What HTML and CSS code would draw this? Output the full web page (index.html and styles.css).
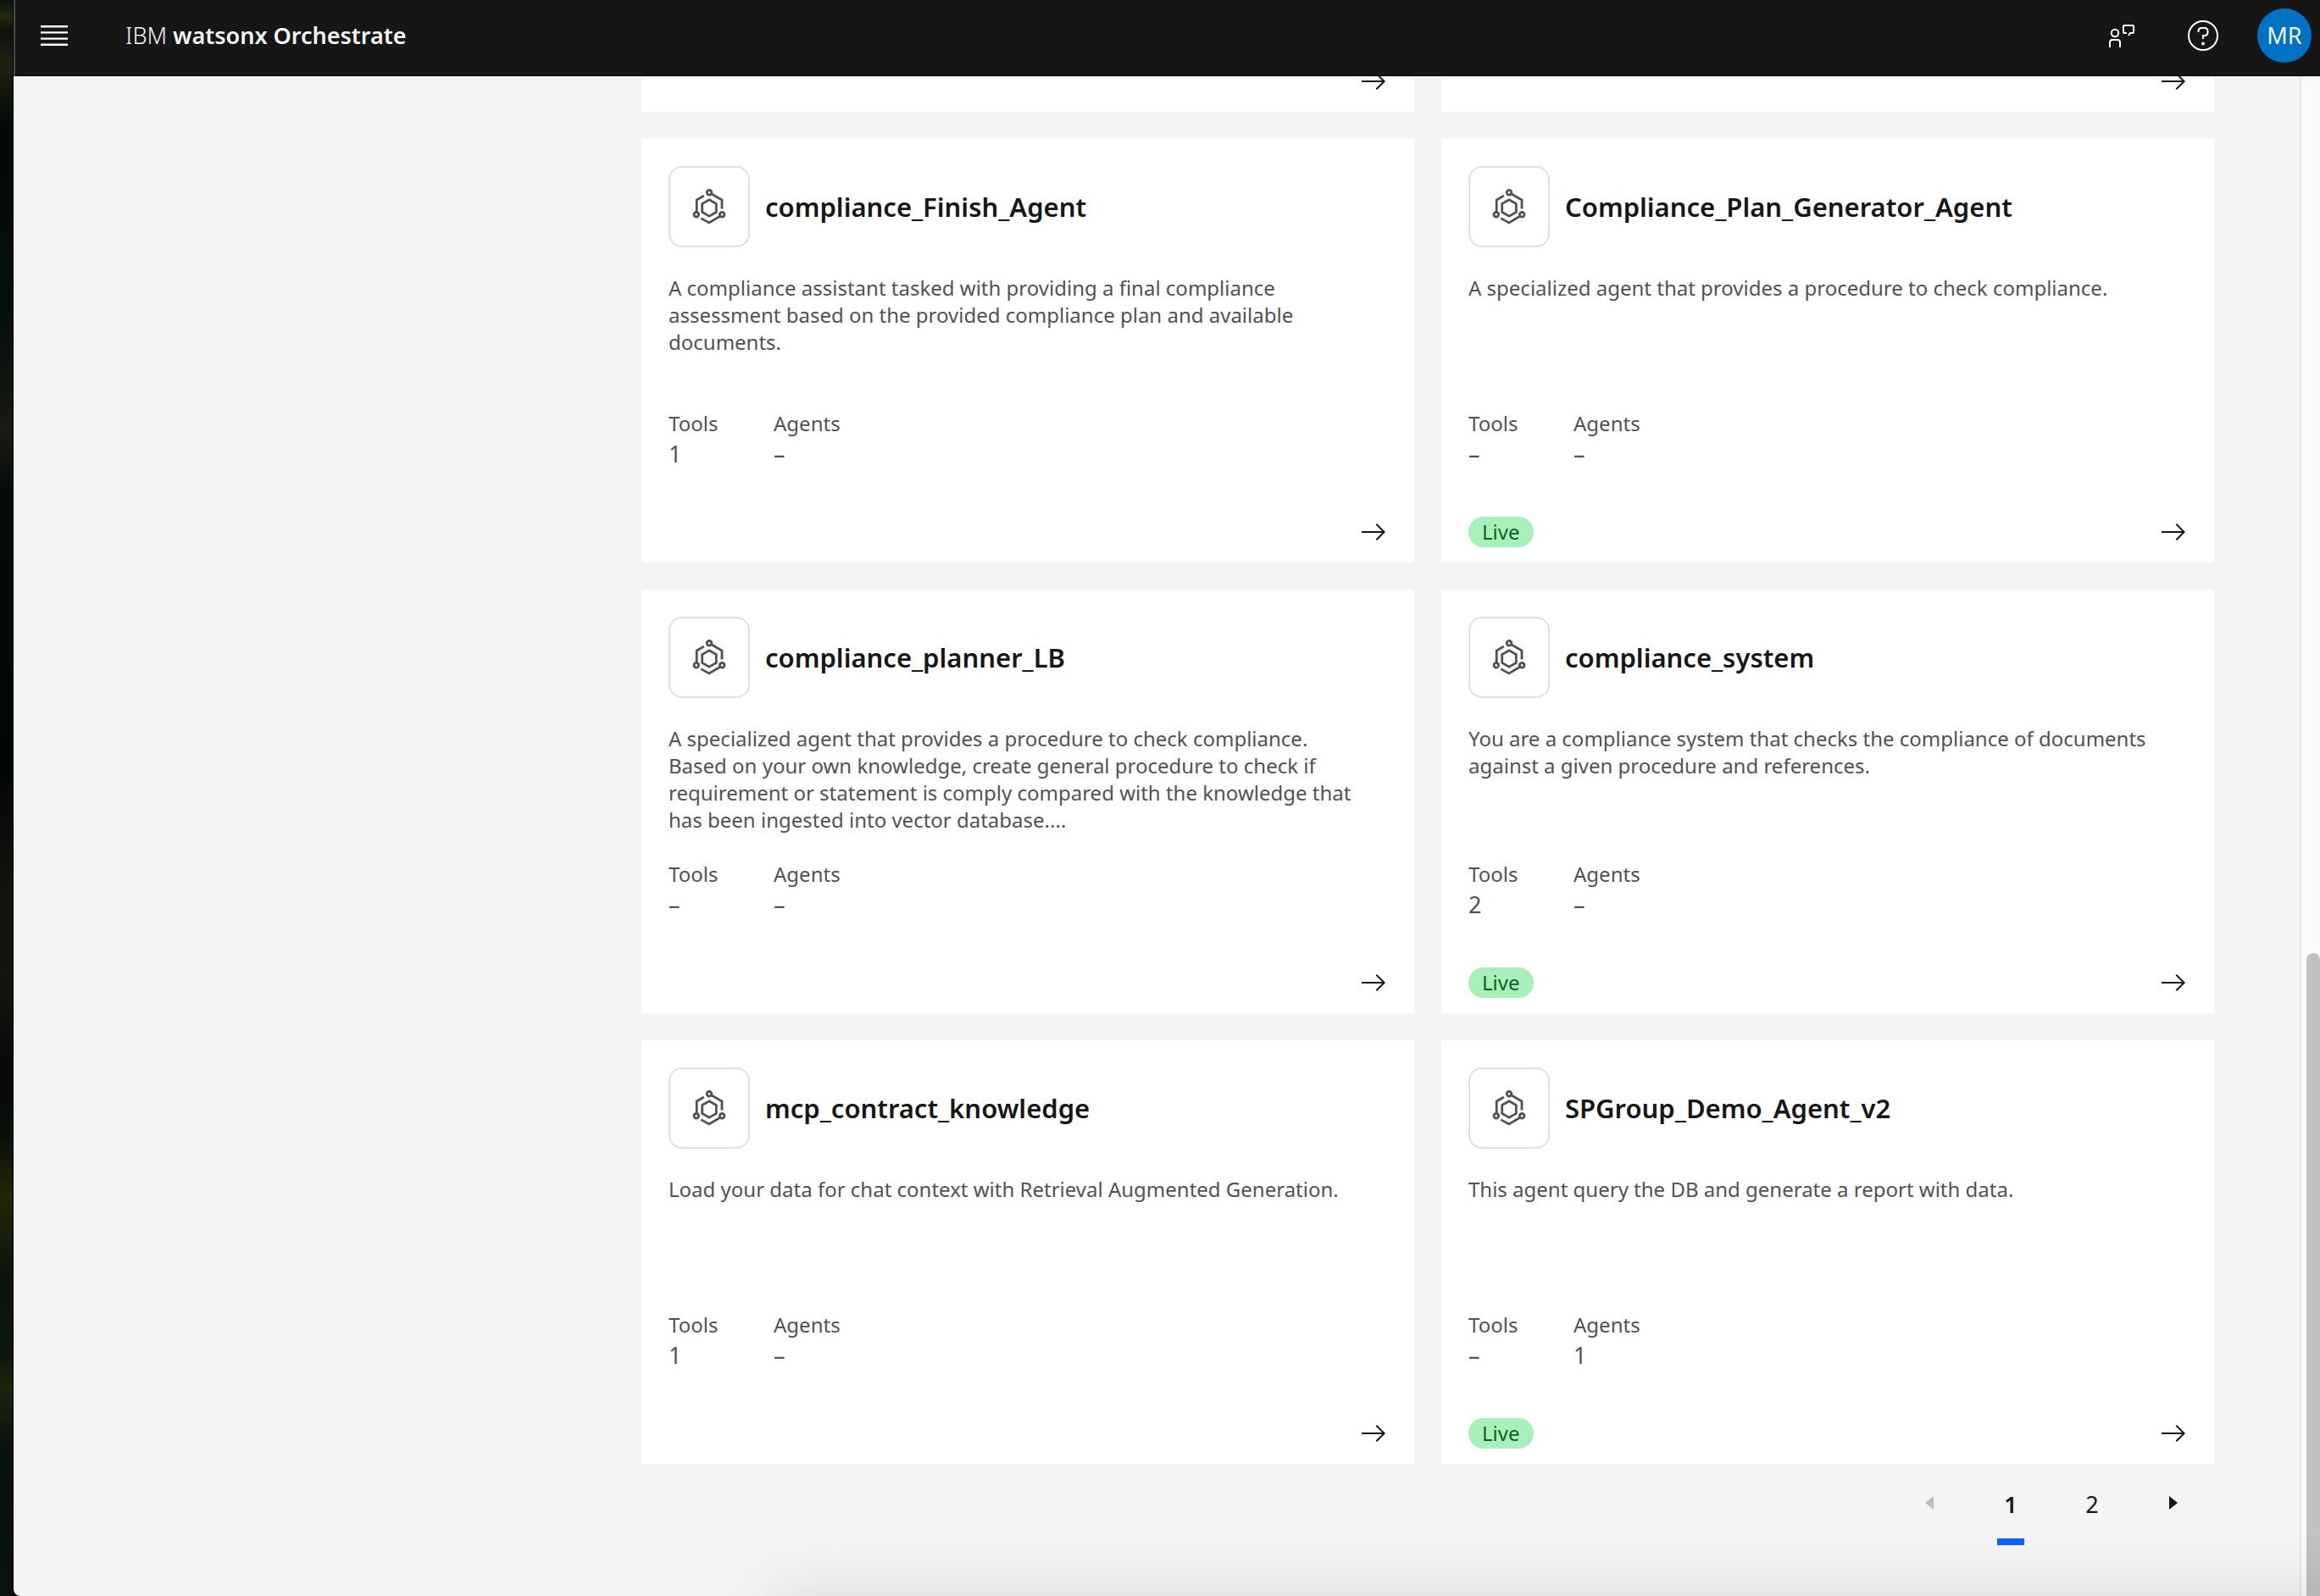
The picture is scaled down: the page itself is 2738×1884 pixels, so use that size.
FILE: index.html
```html
<!DOCTYPE html>
<html lang="en">
<head>
<meta charset="utf-8">
<title>IBM watsonx Orchestrate</title>
<link rel="stylesheet" href="styles.css">
</head>
<body>
<svg class="sprite" aria-hidden="true">
  <symbol id="agent" viewBox="0 0 48 48">
    <g fill="none" stroke="currentColor" stroke-width="2.8">
      <circle cx="24" cy="7.3" r="2.8"/>
      <circle cx="8.8" cy="33.3" r="2.8"/>
      <circle cx="39.2" cy="33.3" r="2.8"/>
      <path d="M24 15.8l8.3 4.8v9.8L24 35.2l-8.3-4.8v-9.8z"/>
      <path d="M9.2 30.5V16l8.6-5M26.5 8.8L39 16v10.5M14.3 37.6l9.6 5.4 12.9-7.7"/>
    </g>
  </symbol>
  <symbol id="arrow" viewBox="0 0 16 16">
    <path fill="currentColor" d="M9.3 3.7L13.1 7.5H1v1h12.1L9.3 12.3 10 13l5-5-5-5z"/>
  </symbol>
</svg>
<div class="desktop-edge"></div>
<div class="window">
  <header class="topbar">
    <button class="icon-button menu" aria-label="Menu">
      <svg width="40" height="40" viewBox="0 0 20 20"><path fill="#fff" d="M2 14.8h16V16H2zM2 11.2h16v1.2H2zM2 7.6h16v1.2H2zM2 4h16v1.2H2z"/></svg>
    </button>
    <a class="brand" href="#">IBM <b>watsonx Orchestrate</b></a>
    <button class="icon-button" aria-label="Feedback">
      <svg width="32" height="32" viewBox="0 0 32 32" fill="none" stroke="#fff" stroke-width="2"><circle cx="8" cy="13" r="4.2"/><path d="M2 30v-6q0-3 3-3h6q3 0 3 3v6M22 13h-3q-1 0-1-1V5q0-1 1-1h10q1 0 1 1v7q0 1-1 1h-3l-2 3"/></svg>
    </button>
    <button class="icon-button" aria-label="Help">
      <svg width="40" height="40" viewBox="0 0 40 40" fill="none" stroke="#fff" stroke-width="2"><circle cx="20" cy="20" r="17"/><path d="M14.5 16v-1q0-4 4-4h3q4 0 4 4v1q0 4-4 4H20v4"/><circle cx="20" cy="29.5" r="2" fill="#fff" stroke="none"/></svg>
    </button>
    <button class="avatar">MR</button>
  </header>
  <div class="body">
    <main class="catalog">
      <div class="cards">
        <article class="card card-end"><footer class="card-foot"><a class="open" href="#" aria-label="Open"><svg><use href="#arrow"/></svg></a></footer></article>
        <article class="card card-end"><footer class="card-foot"><a class="open" href="#" aria-label="Open"><svg><use href="#arrow"/></svg></a></footer></article>

        <article class="card">
          <div class="card-head"><span class="badge"><svg><use href="#agent"/></svg></span><h2>compliance_Finish_Agent</h2></div>
          <p class="about">A compliance assistant tasked with providing a final compliance assessment based on the provided compliance plan and available documents.</p>
          <dl class="stats"><div><dt>Tools</dt><dd>1</dd></div><div><dt>Agents</dt><dd>–</dd></div></dl>
          <footer class="card-foot"><a class="open" href="#" aria-label="Open"><svg><use href="#arrow"/></svg></a></footer>
        </article>
        <article class="card">
          <div class="card-head"><span class="badge"><svg><use href="#agent"/></svg></span><h2>Compliance_Plan_Generator_Agent</h2></div>
          <p class="about">A specialized agent that provides a procedure to check compliance.</p>
          <dl class="stats"><div><dt>Tools</dt><dd>–</dd></div><div><dt>Agents</dt><dd>–</dd></div></dl>
          <footer class="card-foot"><span class="live">Live</span><a class="open" href="#" aria-label="Open"><svg><use href="#arrow"/></svg></a></footer>
        </article>
        <article class="card">
          <div class="card-head"><span class="badge"><svg><use href="#agent"/></svg></span><h2>compliance_planner_LB</h2></div>
          <p class="about">A specialized agent that provides a procedure to check compliance. Based on your own knowledge, create general procedure to check if requirement or statement is comply compared with the knowledge that has been ingested into vector database....</p>
          <dl class="stats"><div><dt>Tools</dt><dd>–</dd></div><div><dt>Agents</dt><dd>–</dd></div></dl>
          <footer class="card-foot"><a class="open" href="#" aria-label="Open"><svg><use href="#arrow"/></svg></a></footer>
        </article>
        <article class="card">
          <div class="card-head"><span class="badge"><svg><use href="#agent"/></svg></span><h2>compliance_system</h2></div>
          <p class="about">You are a compliance system that checks the compliance of documents against a given procedure and references.</p>
          <dl class="stats"><div><dt>Tools</dt><dd>2</dd></div><div><dt>Agents</dt><dd>–</dd></div></dl>
          <footer class="card-foot"><span class="live">Live</span><a class="open" href="#" aria-label="Open"><svg><use href="#arrow"/></svg></a></footer>
        </article>
        <article class="card">
          <div class="card-head"><span class="badge"><svg><use href="#agent"/></svg></span><h2>mcp_contract_knowledge</h2></div>
          <p class="about">Load your data for chat context with Retrieval Augmented Generation.</p>
          <dl class="stats"><div><dt>Tools</dt><dd>1</dd></div><div><dt>Agents</dt><dd>–</dd></div></dl>
          <footer class="card-foot"><a class="open" href="#" aria-label="Open"><svg><use href="#arrow"/></svg></a></footer>
        </article>
        <article class="card">
          <div class="card-head"><span class="badge"><svg><use href="#agent"/></svg></span><h2>SPGroup_Demo_Agent_v2</h2></div>
          <p class="about">This agent query the DB and generate a report with data.</p>
          <dl class="stats"><div><dt>Tools</dt><dd>–</dd></div><div><dt>Agents</dt><dd>1</dd></div></dl>
          <footer class="card-foot"><span class="live">Live</span><a class="open" href="#" aria-label="Open"><svg><use href="#arrow"/></svg></a></footer>
        </article>
      </div>
      <nav class="pages" aria-label="Pages">
        <button class="page step" disabled aria-label="Previous page"><svg width="10" height="16" viewBox="0 0 10 16"><path fill="#bdbdbd" d="M10 0v16L0 8z"/></svg></button>
        <button class="page current" aria-current="page">1</button>
        <button class="page">2</button>
        <button class="page step" aria-label="Next page"><svg width="10" height="16" viewBox="0 0 10 16"><path fill="#161616" d="M0 0v16l10-8z"/></svg></button>
      </nav>
    </main>
    <div class="track"><div class="thumb"></div></div>
  </div>
</div>
<div class="dock-shade"></div>
</body>
</html>
```
FILE: styles.css
```css
* {
  box-sizing: border-box;
}

body {
  margin: 0;
  min-height: 100vh;
  display: flex;
  overflow: hidden;
  background: #000;
  color: #161616;
  font-family: "Noto Sans", sans-serif;
  font-size: 24px;
  line-height: 32px;
}

button {
  border: 0;
  padding: 0;
  background: none;
  color: inherit;
  font: inherit;
}

a {
  color: inherit;
  text-decoration: none;
}

.sprite {
  position: absolute;
  width: 0;
  height: 0;
}

/* strip of wallpaper beside the window */
.desktop-edge {
  width: 16px;
  border-right: 1px solid #000;
  background: linear-gradient(#0c1408, #23280f 1%, #0d1210 2%, #1f220d 4%, #030a09 8%, #04100d 20%, #1a1a10 27%, #040c0b 31%, #020706 48%, #12110d 55%, #16150f 61%, #090909 67%, #070f08 71%, #242607 75%, #0a150b 80%, #0c190c 85%, #1c240c 87%, #07110d 91%, #0a140e);
}

.window {
  flex: 1;
  display: flex;
  flex-direction: column;
  min-width: 0;
  border-bottom-left-radius: 8px;
  overflow: hidden;
  background: #f4f4f4;
}

.topbar {
  display: flex;
  align-items: center;
  height: 90px;
  padding: 0 10px 6px 0;
  border-left: 2px solid #4c4c4c;
  border-bottom: 1px solid #000;
  background: #161616;
  color: #f4f4f4;
}

.icon-button {
  display: grid;
  place-items: center;
  width: 96px;
  height: 64px;
}

.menu {
  width: 92px;
}

.brand {
  margin-left: 38px;
  margin-right: auto;
  font-size: 27px;
  font-weight: 300;
}

.brand b {
  font-weight: 600;
}

.avatar {
  width: 64px;
  height: 64px;
  margin-left: 16px;
  border-radius: 50%;
  background: #0072c3;
  font-size: 27px;
}

.body {
  flex: 1;
  display: flex;
}

.catalog {
  flex: 1;
  padding: 0 101px 60px 741px;
}

.cards {
  display: grid;
  grid-template-columns: 1fr 1fr;
  gap: 32px;
}

.card {
  display: flex;
  flex-direction: column;
  min-height: 500px;
  padding: 32px 32px 18px;
  background: #fff;
}

.card-end {
  min-height: 42px;
  height: 42px;
  padding-top: 0;
  justify-content: flex-end;
  overflow: hidden;
}

.card-head {
  display: flex;
  align-items: center;
  gap: 18px;
}

.badge {
  display: grid;
  place-items: center;
  width: 96px;
  height: 96px;
  border: 2px solid #e0e0e0;
  border-radius: 16px;
  color: #525252;
}

.badge svg {
  width: 48px;
  height: 48px;
}

h2 {
  margin: 0;
  font-size: 31px;
  line-height: 40px;
  font-weight: 600;
}

.about {
  min-height: 128px;
  margin: 32px 0;
  padding-right: 32px;
  color: #525252;
}

.stats {
  display: grid;
  grid-template-columns: 60px 120px;
  gap: 64px;
  margin: 0;
  color: #525252;
}

.stats dd {
  margin: 0;
  font-size: 27px;
  line-height: 40px;
}

.card-foot {
  display: flex;
  align-items: center;
  height: 36px;
  flex-shrink: 0;
  margin-top: auto;
}

.live {
  padding: 2px 16px;
  border-radius: 18px;
  background: #a7f0ba;
  color: #0e6027;
}

.open {
  display: flex;
  margin-left: auto;
}

.open svg {
  width: 32px;
  height: 32px;
}

.pages {
  display: flex;
  justify-content: flex-end;
}

.page {
  display: grid;
  place-items: center;
  width: 96px;
  height: 96px;
  font-size: 27px;
}

.step {
  padding-bottom: 4px;
}

.current {
  font-weight: 600;
  background: linear-gradient(#0f62fe, #0f62fe) bottom / 32px 8px no-repeat;
}

.track {
  display: flex;
  flex-direction: column;
  justify-content: flex-end;
  width: 24px;
  padding-left: 6px;
  border-left: 2px solid #e8e8e8;
  background: #fafafa;
}

.thumb {
  height: 42.3%;
  border-radius: 8px 8px 0 0;
  background: #c1c1c1;
}

/* shadow cast from below the bottom edge of the screen */
.dock-shade {
  position: fixed;
  top: 100%;
  left: 910px;
  right: -200px;
  height: 200px;
  border-radius: 24px;
  box-shadow: 0 0 80px rgba(0, 0, 0, 0.12);
}
```
